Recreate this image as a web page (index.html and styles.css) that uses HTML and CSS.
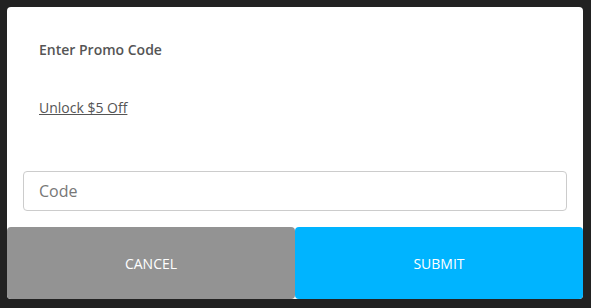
FILE: index.html
```html
<!DOCTYPE html>
<html>
<head>
<meta charset="utf-8">
<link rel="stylesheet" href="styles.css">
</head>
<body>
<div class="dialog">
  <div class="body">
    <div class="title">Enter Promo Code</div>
    <a class="link" href="#">Unlock $5 Off</a>
    <input class="code" type="text" placeholder="Code">
  </div>
  <div class="actions">
    <button class="btn cancel">CANCEL</button>
    <button class="btn submit">SUBMIT</button>
  </div>
</div>
</body>
</html>
```

FILE: styles.css
```css
html, body {
  margin: 0;
  background: #222222;
}
body {
  padding: 7px;
  font-family: "Open Sans", sans-serif;
}
.dialog {
  width: 576px;
  height: 292px;
  background: #ffffff;
  border-radius: 4px;
  display: flex;
  flex-direction: column;
}
.body {
  flex: 1;
  display: flex;
  flex-direction: column;
  align-items: flex-start;
  padding: 33px 16px 0 16px;
}
.title {
  font-size: 14px;
  font-weight: 600;
  line-height: 20px;
  color: #555555;
  padding-left: 16px;
}
.link {
  margin-top: 38px;
  margin-left: 16px;
  font-size: 14px;
  line-height: 20px;
  color: #555555;
  text-decoration: underline;
}
.code {
  margin-top: 53px;
  box-sizing: border-box;
  width: 544px;
  height: 40px;
  border: 1px solid #cccccc;
  border-radius: 4px;
  padding: 0 15px;
  font-family: "Open Sans", sans-serif;
  font-size: 16px;
  color: #555555;
  outline: none;
}
.code::placeholder {
  color: #777777;
}
.actions {
  display: flex;
  height: 72px;
}
.btn {
  flex: 1;
  border: none;
  border-radius: 4px;
  color: #ffffff;
  font-family: "Open Sans", sans-serif;
  font-size: 14px;
  padding: 0;
}
.cancel {
  background: #939393;
}
.submit {
  background: #00b4ff;
}
```
